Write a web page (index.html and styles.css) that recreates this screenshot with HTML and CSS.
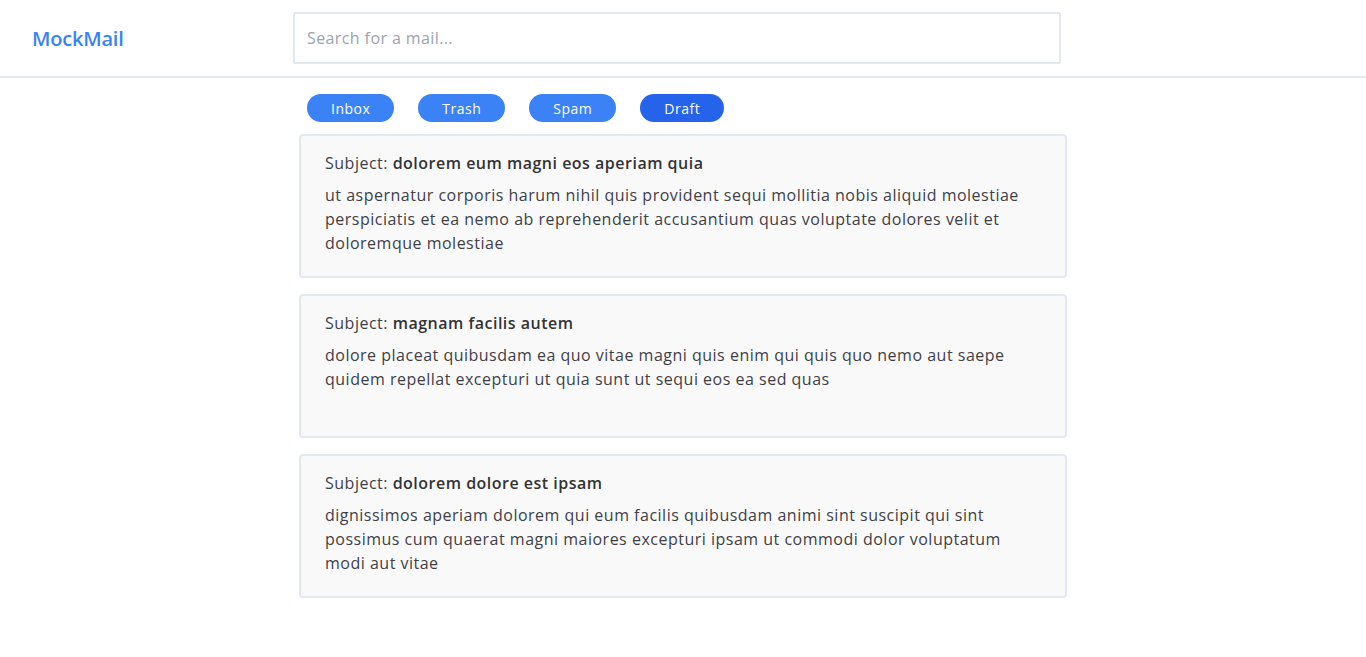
FILE: index.html
```html
<!DOCTYPE html>
<html lang="en">
<head>
<meta charset="utf-8">
<title>MockMail</title>
<link rel="stylesheet" href="styles.css">
</head>
<body>
<header class="header">
  <div class="logo">MockMail</div>
  <input class="search" type="text" placeholder="Search for a mail...">
</header>
<main class="main">
  <nav class="tabs">
    <button class="tab">Inbox</button>
    <button class="tab">Trash</button>
    <button class="tab">Spam</button>
    <button class="tab active">Draft</button>
  </nav>
  <div class="list">
    <article class="card">
      <div class="subject">Subject: <b>dolorem eum magni eos aperiam quia</b></div>
      <p class="body">ut aspernatur corporis harum nihil quis provident sequi mollitia nobis aliquid molestiae perspiciatis et ea nemo ab reprehenderit accusantium quas voluptate dolores velit et doloremque molestiae</p>
    </article>
    <article class="card">
      <div class="subject">Subject: <b>magnam facilis autem</b></div>
      <p class="body">dolore placeat quibusdam ea quo vitae magni quis enim qui quis quo nemo aut saepe quidem repellat excepturi ut quia sunt ut sequi eos ea sed quas</p>
    </article>
    <article class="card">
      <div class="subject">Subject: <b>dolorem dolore est ipsam</b></div>
      <p class="body">dignissimos aperiam dolorem qui eum facilis quibusdam animi sint suscipit qui sint possimus cum quaerat magni maiores excepturi ipsam ut commodi dolor voluptatum modi aut vitae</p>
    </article>
  </div>
</main>
</body>
</html>
```
FILE: styles.css
```css
* { box-sizing: border-box; }
body {
  margin: 0;
  font-family: "Open Sans", "Liberation Sans", sans-serif;
  color: #3f3f46;
  background: #fff;
}
.header {
  display: flex;
  align-items: center;
  height: 78px;
  padding: 0 32px;
  border-bottom: 2px solid #e2e8f0;
}
.logo {
  width: 261px;
  font-size: 20px;
  font-weight: 600;
  color: #3b82f6;
  letter-spacing: -0.2px;
}
.search {
  width: 768px;
  height: 52px;
  border: 2px solid #e2e8f0;
  border-radius: 2px;
  padding: 0 12px;
  font-family: inherit;
  font-size: 16px;
  letter-spacing: 0.4px;
  color: #3f3f46;
  outline: none;
}
.search::placeholder { color: #9ca3af; }
.main {
  width: 768px;
  margin: 0 auto;
  padding-top: 16px;
}
.tabs {
  display: flex;
  gap: 24px;
  padding-left: 8px;
  margin-bottom: 12px;
}
.tab {
  height: 28px;
  padding: 0 24px;
  border: none;
  border-radius: 14px;
  background: #3b82f6;
  color: #fff;
  font-family: inherit;
  font-size: 14px;
  letter-spacing: 0.5px;
  cursor: pointer;
}
.tab.active { background: #2563eb; }
.list {
  display: flex;
  flex-direction: column;
  gap: 16px;
}
.card {
  height: 144px;
  padding: 15px 24px;
  background: #f9f9fa;
  border: 2px solid #e2e8f0;
  border-radius: 4px;
  letter-spacing: 0.5px;
}
.subject {
  font-size: 16px;
  line-height: 24px;
}
.subject b { font-weight: 600; color: #333; }
.body {
  margin: 8px 0 0;
  font-size: 16px;
  line-height: 24px;
}
```
